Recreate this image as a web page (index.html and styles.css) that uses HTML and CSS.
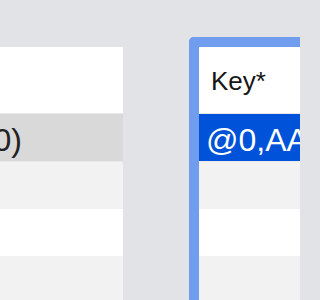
FILE: index.html
```html
<!DOCTYPE html>
<html>
<head>
<meta charset="utf-8">
<link rel="stylesheet" href="styles.css">
</head>
<body>
<div class="canvas">
  <div class="table left">
    <div class="head"></div>
    <div class="row sel-grey"><span class="cell">List(0)</span></div>
    <div class="row stripe"></div>
    <div class="row"></div>
    <div class="row stripe"></div>
  </div>
  <div class="table right">
    <div class="head"><span class="head-cell">Key*</span></div>
    <div class="row sel-blue"><span class="cell">@0,AAAAAAA</span></div>
    <div class="row stripe"></div>
    <div class="row"></div>
    <div class="row stripe"></div>
  </div>
</div>
</body>
</html>
```

FILE: styles.css
```css
html, body {
  margin: 0;
  padding: 0;
  width: 300px;
  height: 300px;
  overflow: hidden;
  background: #e2e3e7;
  font-family: "Liberation Sans", Arial, sans-serif;
}
.canvas {
  display: flex;
  align-items: flex-start;
  padding-top: 37px;
  gap: 66px;
  width: 300px;
  height: 300px;
  box-sizing: border-box;
  overflow: hidden;
}
.table {
  background: #ffffff;
  flex: none;
}
.left {
  width: 206px;
  margin-left: -83px;
  margin-top: 10px;
}
.right {
  width: 111px;
  border: 10px solid #719dee;
  border-right: none;
  border-radius: 5px 0 0 5px;
  box-sizing: border-box;
}
.head {
  border-bottom: 1px solid #e8e8e8;
  display: flex;
  align-items: center;
  padding-left: 12px;
  padding-top: 2px;
  box-sizing: border-box;
  height: 67px;
}
.head-cell {
  font-size: 26px;
  color: #161616;
}
.row {
  height: 47px;
  display: flex;
  align-items: center;
  padding-left: 7px;
  padding-top: 6px;
  box-sizing: border-box;
  font-size: 32px;
  white-space: nowrap;
  overflow: hidden;
}
.left .row {
  padding-left: 16px;
}
.stripe {
  background: #f1f2f1;
}
.sel-grey {
  background: #d9d9d9;
  color: #222222;
  height: 48px;
  border-bottom: 1px solid #e9e9e9;
}
.sel-blue {
  background: #0052d9;
  color: #ffffff;
  height: 48px;
  border-bottom: 1px solid #e9e9e9;
}
```
